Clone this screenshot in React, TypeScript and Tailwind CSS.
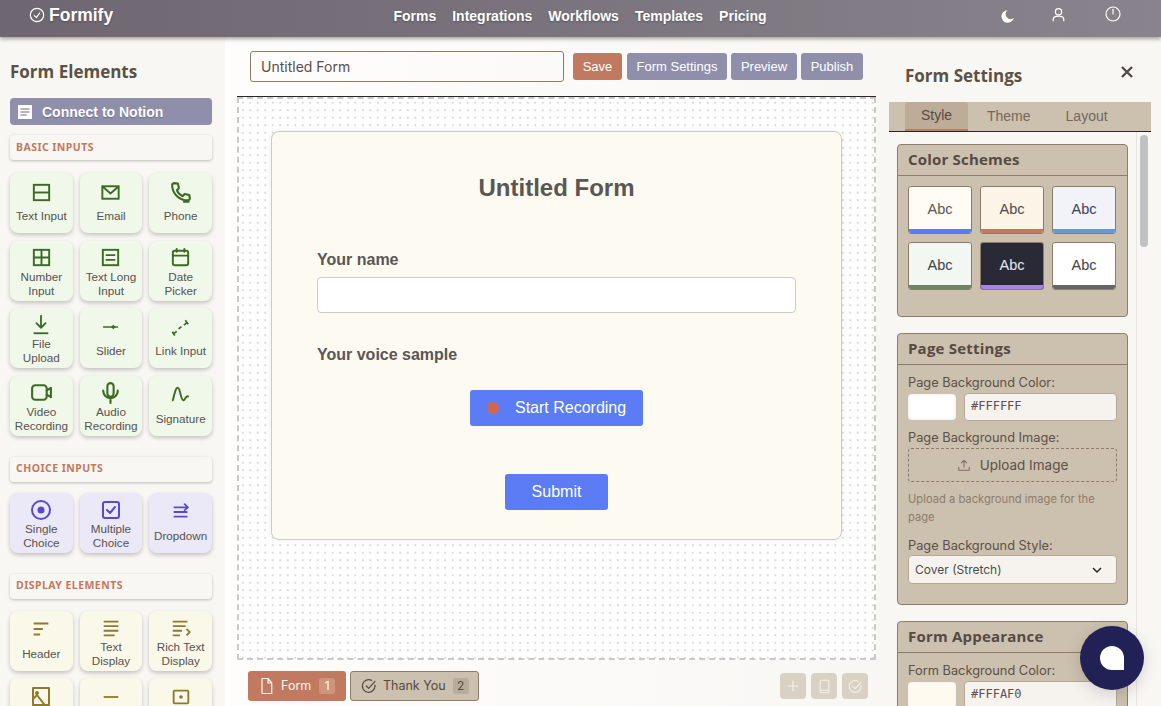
import React from 'react';

interface Tile {
  label: string;
  icon: React.ReactNode;
}

const I = ({ children, size = 22 }: { children: React.ReactNode; size?: number }) => (
  <svg
    width={size}
    height={size}
    viewBox="0 0 24 24"
    fill="none"
    stroke="currentColor"
    strokeWidth={2}
    strokeLinecap="round"
    strokeLinejoin="round"
    className="shrink-0"
  >
    {children}
  </svg>
);

const basicInputs: Tile[] = [
  { label: 'Text Input', icon: <I size={23}><rect x="4" y="4" width="16" height="16" strokeLinejoin="miter" /><path d="M4 12h16" strokeLinecap="butt" /></I> },
  { label: 'Email', icon: <I size={23}><rect x="3.5" y="5.5" width="17" height="13" strokeLinejoin="miter" /><path d="M4 6l8 7 8-7" /></I> },
  { label: 'Phone', icon: <I size={25}><path d="M6 3l3.5.5 1 4.500-2 1.800c1 2.600 3.200 4.800 5.700 5.700l1.800-2 4.500 1 .5 3.500c-.2 1-1 1.500-2 1.500C10.800 19.500 4 13 4 5c0-1 .8-1.800 2-2z" /><path d="M20 21h-5" strokeWidth={1.500} /></I> },
  { label: 'Number\nInput', icon: <I size={23}><rect x="4" y="4" width="16" height="16" strokeLinejoin="miter" /><path d="M12 4v16M4 12h16" strokeLinecap="butt" /></I> },
  { label: 'Text Long\nInput', icon: <I size={23}><rect x="4" y="4" width="16" height="16" strokeLinejoin="miter" /><path d="M7 9.500h10M7 14.500h10" strokeLinecap="butt" /></I> },
  { label: 'Date\nPicker', icon: <I size={23}><rect x="4" y="5" width="16" height="15" rx="2" /><path d="M4 10h16M8 3v3M16 3v3" /></I> },
  { label: 'File\nUpload', icon: <I><path d="M12 2v13M7 10l5 5 5-5" /><path d="M4 21h16" strokeLinecap="butt" /></I> },
  { label: 'Slider', icon: <I><path d="M4 12h15" strokeWidth={1.800} /><path d="M12 12l2.500-2.500L17 12l-2.500 2.500z" fill="currentColor" stroke="none" /></I> },
  { label: 'Link Input', icon: <I size={23}><path d="M4 19l4-3M3.500 16.500l2.500 4M10 13.500l3-2.500M15.500 9.500l4-3M17 4.500l3 4" strokeWidth={1.800} strokeLinecap="butt" /></I> },
  { label: 'Video\nRecording', icon: <I size={25}><rect x="3" y="5" width="14" height="14" rx="3" /><path d="M17 10l4-2.500v9L17 14" /></I> },
  { label: 'Audio\nRecording', icon: <I size={25}><rect x="9" y="3" width="6" height="13" rx="3" /><path d="M5 10c0 4.500 3 7.500 7 7.500s7-3 7-7.500M12 17.500V22" /></I> },
  { label: 'Signature', icon: <I size={23}><path d="M4 18C6 10 7 5 9 5c3 0 3 13 6 13 2 0 2-5 5-4" /></I> },
];

const choiceInputs: Tile[] = [
  { label: 'Single\nChoice', icon: <I size={24}><circle cx="12" cy="12" r="9" /><circle cx="12" cy="12" r="2.500" fill="currentColor" /></I> },
  { label: 'Multiple\nChoice', icon: <I size={24}><rect x="4" y="4" width="16" height="16" rx="2" /><path d="M8 12l3 3 5-6" /></I> },
  { label: 'Dropdown', icon: <I><path d="M4 7h15M4 12h15M4 17h15" strokeLinecap="butt" /><path d="M16 3.500L19.500 7 16 10" /></I> },
];

const displayElements: Tile[] = [
  { label: 'Header', icon: <I><path d="M4 5h16M4 11h10M4 17h7" strokeWidth={2.200} strokeLinecap="butt" /></I> },
  { label: 'Text\nDisplay', icon: <I><path d="M4 5h16M4 10h16M4 15h16M4 20h12" strokeLinecap="butt" /></I> },
  { label: 'Rich Text\nDisplay', icon: <I><path d="M3 5h16M3 10h14M3 15h10M3 20h8M18 13l3.500 3.500L18 20" strokeLinecap="butt" /></I> },
  { label: '', icon: <I size={24}><rect x="4" y="3" width="16" height="17" /><path d="M4 14l4-4 10 13" /><circle cx="8" cy="8" r="1" /></I> },
  { label: '', icon: <I><path d="M4 12h16" strokeLinecap="butt" /></I> },
  { label: '', icon: <I><rect x="4" y="5" width="16" height="14" rx="1" /><circle cx="12" cy="12" r="1" fill="currentColor" /></I> },
];

const schemes = [
  { bg: 'bg-[#fffbf5]', text: 'text-[#5a5654]', bar: 'bg-[#5c7cf5]' },
  { bg: 'bg-[#fdf4e8]', text: 'text-[#4f4a46]', bar: 'bg-[#c17a5f]' },
  { bg: 'bg-[#f1f3f9]', text: 'text-[#3a4256]', bar: 'bg-[#6c97d6]' },
  { bg: 'bg-[#f3f7f1]', text: 'text-[#38444a]', bar: 'bg-[#6b8560]' },
  { bg: 'bg-[#2a2a36]', text: 'text-[#e8e8ee]', bar: 'bg-[#a684ee]' },
  { bg: 'bg-white', text: 'text-[#3f4248]', bar: 'bg-[#666666]' },
];

const ElementGrid = ({ tiles, color }: { tiles: Tile[]; color: string }) => {
  const palette: Record<string, { bg: string; icon: string }> = {
    green: { bg: 'bg-[#f0f8e9]', icon: 'text-[#3b6b22]' },
    purple: { bg: 'bg-[#ebe8f8]', icon: 'text-[#5a48cf]' },
    yellow: { bg: 'bg-[#faf8e9]', icon: 'text-[#8e7a2e]' },
  };
  const p = palette[color];
  return (
    <div className="grid grid-cols-3 gap-x-[7px] gap-y-[7.5px]">
      {tiles.map((t, i) => {
        const twoLines = t.label.includes('\n');
        return (
          <div
            key={i}
            className={`h-[60px] rounded-[8px] ${p.bg} shadow-[0_2px_4px_rgba(0,0,0,0.22)] flex flex-col items-center justify-center ${
              twoLines ? 'pt-[3px]' : 'pb-[2px]'
            }`}
          >
            <span className={`h-[22px] flex items-center justify-center ${p.icon}`}>{t.icon}</span>
            <span
              className={`min-h-[14px] text-[11.7px] leading-[14px] text-center whitespace-pre-line text-[#575350] ${
                twoLines ? 'mt-[1px]' : 'mt-[6px]'
              }`}
            >
              {t.label}
            </span>
          </div>
        );
      })}
    </div>
  );
};

const SectionHeader = ({ title }: { title: string }) => (
  <div className="h-[25px] rounded-[4px] bg-[#f9f7f4] shadow-[0_1px_3px_rgba(0,0,0,0.25)] flex items-center pl-[6px] font-['Noto_Sans',sans-serif] font-bold text-[10.5px] tracking-[0.45px] text-[#c4785d]">
    {title}
  </div>
);

const Panel = ({ title, children, className }: { title: string; children: React.ReactNode; className: string }) => (
  <div className={`shrink-0 rounded-[4px] border border-[#8c7d6b] bg-[#ccc0ae] ${className}`}>
    <div className="h-[31px] border-b border-[#8c7d6b] pl-[10px] pb-[2px] flex items-center font-['Open_Sans',sans-serif] font-bold text-[15px] tracking-[0.2px] text-[#574a42]">
      {title}
    </div>
    {children}
  </div>
);

const ColorField = ({ swatch, value }: { swatch: string; value: string }) => (
  <div className="mt-[1px] flex items-center gap-[8px]">
    <div className={`w-[48px] h-[26px] rounded-[4px] border-2 border-[#f9f7f4] ${swatch}`} />
    <div className="w-[153px] h-[28px] rounded-[4px] border border-[#b5a999] bg-[#f6f3ef] pl-[6px] pb-[2px] flex items-center font-['DejaVu_Sans_Mono',monospace] text-[12px] text-[#5a5250]">
      {value}
    </div>
  </div>
);

const fieldLabel = "font-['Inter',sans-serif] text-[12.8px] leading-[18px] text-[#5c5048]";

export default function App() {
  return (
    <div className="w-[1161px] h-[706px] overflow-hidden relative flex flex-col bg-[#f9f7f4] font-['Liberation_Sans',Arial,sans-serif]">
      <header className="relative z-10 h-[37px] shrink-0 flex items-center bg-gradient-to-r from-[#6e6670] to-[#88838c] shadow-[0_2px_4px_rgba(60,55,40,0.45)] text-white">
        <div className="flex-1 flex items-center pl-[29px] mt-[-6px]">
          <svg width="16" height="16" viewBox="0 0 24 24" fill="none" stroke="currentColor" strokeWidth={1.800} strokeLinecap="round" strokeLinejoin="round" className="mt-[-2px]">
            <circle cx="12" cy="12" r="10" />
            <path d="M8 13l3 3 5-7" />
          </svg>
          <span className="ml-[4px] text-[17.5px] font-bold [text-shadow:0_1px_2px_rgba(0,0,0,0.25)]">Formify</span>
        </div>
        <nav className="flex gap-[16px] ml-[10px] mt-[-5px] text-[14px] font-bold [text-shadow:0_1px_2px_rgba(0,0,0,0.3)]">
          <span>Forms</span>
          <span>Integrations</span>
          <span>Workflows</span>
          <span>Templates</span>
          <span>Pricing</span>
        </nav>
        <div className="flex-1 flex items-center justify-end pr-[40px] mt-[-8px]">
          <svg width="15" height="15" viewBox="0 0 24 24" fill="currentColor" className="mt-[3px]">
            <path d="M12 2a10 10 0 1 0 10 12.500A8 8 0 0 1 12 2z" />
          </svg>
          <svg width="15" height="15" viewBox="0 0 24 24" fill="none" stroke="currentColor" strokeWidth={2} strokeLinecap="round" className="ml-[36px]">
            <circle cx="12" cy="7.500" r="5" />
            <path d="M3.500 22v-2c0-3.500 3-5.500 8.500-5.500s8.500 2 8.500 5.500v2" />
          </svg>
          <svg width="16" height="16" viewBox="0 0 24 24" fill="none" stroke="currentColor" strokeWidth={1.800} strokeLinecap="round" className="ml-[39px] mt-[-1px]">
            <circle cx="12" cy="12" r="10.500" />
            <path d="M12 5v7" />
          </svg>
        </div>
      </header>

      <div className="flex-1 flex min-h-0">
        {/* left sidebar */}
        <aside className="w-[225px] shrink-0 overflow-hidden pl-[10px] pr-[13px] pt-[26px] bg-[#f9f7f4]">
          <h2 className="font-['Open_Sans',sans-serif] font-bold text-[17px] leading-[18px] text-[#5a5246]">Form Elements</h2>
          <div className="mt-[17px] h-[27px] rounded-[4px] bg-[#8f8fac] flex items-center pl-[7px] text-white font-bold text-[14px] [text-shadow:0_1px_1px_rgba(0,0,0,0.25)]">
            <svg width="16" height="16" viewBox="0 0 16 16" className="mr-[9px]">
              <rect x="1" y="1" width="14" height="14" fill="#ffffff" />
              <path d="M3.500 5h9M3.500 8h9M3.500 11h6" stroke="#6a6a88" strokeWidth={1.200} />
            </svg>
            <span className="mt-[1px]">Connect to Notion</span>
          </div>
          <div className="mt-[10px]"><SectionHeader title="BASIC INPUTS" /></div>
          <div className="mt-[13px]"><ElementGrid tiles={basicInputs} color="green" /></div>
          <div className="mt-[21px]"><SectionHeader title="CHOICE INPUTS" /></div>
          <div className="mt-[11px]"><ElementGrid tiles={choiceInputs} color="purple" /></div>
          <div className="mt-[21px]"><SectionHeader title="DISPLAY ELEMENTS" /></div>
          <div className="mt-[12px]"><ElementGrid tiles={displayElements} color="yellow" /></div>
        </aside>

        {/* builder */}
        <main className="w-[664px] shrink-0 pl-[12px] pr-[13px] flex flex-col bg-gradient-to-r from-[#fefdfb] to-[#f9f7f4]">
          <div className="h-[60px] shrink-0 border-b border-[#2a2624] pl-[13px] flex items-start pt-[14px]">
            <div className="w-[314px] h-[31px] rounded-[3px] border border-[#8c7d6b] pl-[10px] flex items-center font-['Inter',sans-serif] text-[14px] text-[#5a4e48]">
              Untitled Form
            </div>
            <div className="ml-[9px] mt-[2px] flex text-[13px] text-white">
              <span className="w-[49px] h-[27px] rounded-[3px] bg-[#c17a5f] flex items-center justify-center">Save</span>
              <span className="ml-[5px] w-[100px] h-[27px] rounded-[3px] bg-[#8f8fac] flex items-center justify-center">Form Settings</span>
              <span className="ml-[4px] w-[66px] h-[27px] rounded-[3px] bg-[#8f8fac] flex items-center justify-center">Preview</span>
              <span className="ml-[4px] w-[62px] h-[27px] rounded-[3px] bg-[#8f8fac] flex items-center justify-center">Publish</span>
            </div>
          </div>

          <div className="h-[563px] shrink-0 border-2 border-dashed border-[#c9c9c9] bg-white bg-[radial-gradient(#c8c8c8_0.6px,transparent_0.8px)] bg-[size:7.5px_7.5px] p-[32px]">
            <div className="h-[409px] rounded-[8px] border border-[#cfcbc4] bg-[#fdfaf2] shadow-[0_0_6px_rgba(0,0,0,0.08)] px-[45px] pt-[40px] flex flex-col items-center text-[#5a5654]">
              <h1 className="text-[24px] leading-[32px] font-bold">Untitled Form</h1>
              <label className="self-start mt-[46px] text-[16px] leading-[20px] font-bold">Your name</label>
              <div className="self-stretch mt-[7px] h-[36px] rounded-[4px] border border-[#cfcbc4] bg-white" />
              <label className="self-start mt-[32px] text-[16px] leading-[20px] font-bold">Your voice sample</label>
              <div className="mt-[25px] w-[173px] h-[36px] rounded-[3px] bg-[#5c7cf5] flex items-center pl-[17px] text-white text-[16px]">
                <span className="w-[12px] h-[12px] rounded-full bg-[#d2654f] mr-[16px]" />
                Start Recording
              </div>
              <div className="mt-[48px] w-[103px] h-[36px] rounded-[3px] bg-[#5c7cf5] flex items-center justify-center text-white text-[16px]">
                Submit
              </div>
            </div>
          </div>

          <div className="flex-1 flex items-start pl-[11px] pt-[11px] pr-[8px] font-['Inter',sans-serif] text-[12.5px]">
            <div className="w-[98px] h-[30px] rounded-[3px] bg-[#c17a5f] flex items-center pl-[11px] text-[#fdf8f3]">
              <svg width="15" height="18" viewBox="0 0 20 24" fill="none" stroke="currentColor" strokeWidth={1.600} strokeLinejoin="round" className="shrink-0">
                <path d="M4 2h8l5 6v14H4zM12 2v6h5" />
              </svg>
              <span className="ml-[7px]">Form</span>
              <span className="ml-[8px] w-[16px] h-[16px] rounded-[3px] bg-white/20 flex items-center justify-center text-[12px]">1</span>
            </div>
            <div className="ml-[4px] w-[129px] h-[30px] rounded-[3px] border border-[#8c7d6b] bg-[#ccc0ae] flex items-center pl-[10px] text-[#574a42]">
              <svg width="16" height="16" viewBox="0 0 24 24" fill="none" stroke="currentColor" strokeWidth={1.800} strokeLinecap="round" strokeLinejoin="round" className="shrink-0">
                <path d="M21 10.500V12a9.500 9.500 0 1 1-5-8.400" />
                <path d="M8 12l3.500 3.500L21 5" />
              </svg>
              <span className="ml-[6px]">Thank You</span>
              <span className="ml-[7px] w-[16px] h-[16px] rounded-[3px] bg-[#8c7d6b]/30 flex items-center justify-center text-[12px]">2</span>
            </div>
            <div className="ml-auto flex gap-[5px] mt-[2px] text-[#f4f0e9]">
              <span className="w-[26px] h-[26px] rounded-[4px] bg-[#d9d1c4] flex items-center justify-center">
                <svg width="14" height="14" viewBox="0 0 24 24" fill="none" stroke="currentColor" strokeWidth={2}><path d="M12 3v18M3 12h18" /></svg>
              </span>
              <span className="w-[26px] h-[26px] rounded-[4px] bg-[#d9d1c4] flex items-center justify-center">
                <svg width="15" height="15" viewBox="0 0 24 24" fill="none" stroke="currentColor" strokeWidth={1.800} strokeLinejoin="round"><path d="M5 4a2 2 0 0 1 2-2h12v20H7a2 2 0 0 1-2-2zM5 18h14" /></svg>
              </span>
              <span className="w-[26px] h-[26px] rounded-[4px] bg-[#d9d1c4] flex items-center justify-center">
                <svg width="15" height="15" viewBox="0 0 24 24" fill="none" stroke="currentColor" strokeWidth={1.800} strokeLinecap="round" strokeLinejoin="round"><path d="M21 10.500V12a9.500 9.500 0 1 1-5-8.400" /><path d="M8 12l3.500 3.500L21 5" /></svg>
              </span>
            </div>
          </div>
        </main>

        {/* right settings */}
        <aside className="flex-1 min-w-0 bg-[#f9f7f4] flex flex-col">
          <div className="h-[65px] shrink-0 flex items-start justify-between pl-[16px] pr-[28px] pt-[28px]">
            <h2 className="font-['Open_Sans',sans-serif] font-bold text-[17px] leading-[21px] text-[#5a5246]">Form Settings</h2>
            <svg width="12" height="12" viewBox="0 0 12 12" stroke="#4f4a46" strokeWidth={2.400} className="mt-[1px]"><path d="M1 1l10 10M11 1L1 11" /></svg>
          </div>
          <div className="w-[262px] h-[30px] shrink-0 bg-[#ccc0ae] border-b border-[#2a2624] pl-[16px] flex text-[14px] text-[#74685c]">
            <span className="w-[63px] rounded-t-[3px] border-b-2 border-[#c17a5f] bg-[#bcac98] text-[#574a42] flex items-center justify-center">Style</span>
            <span className="ml-[19px] flex items-center">Theme</span>
            <span className="ml-[35px] flex items-center">Layout</span>
          </div>
          <div className="flex-1 min-h-0 overflow-hidden flex w-[262px]">
            <div className="w-[247px] shrink-0 pl-[8px] pt-[12px] flex flex-col gap-[16px]">
              <Panel title="Color Schemes" className="w-[231px] h-[173px]">
                <div className="grid grid-cols-3 gap-x-[8px] gap-y-[8px] pt-[10px] pl-[10px] pr-[11px]">
                  {schemes.map((s, i) => (
                    <div key={i} className={`h-[48px] rounded-[3px] border border-[#8c7d6b] overflow-hidden flex flex-col ${s.bg}`}>
                      <div className={`flex-1 pt-[4px] flex items-center justify-center text-[14.5px] ${s.text}`}>Abc</div>
                      <div className={`h-[4px] ${s.bar}`} />
                    </div>
                  ))}
                </div>
              </Panel>
              <Panel title="Page Settings" className="w-[231px] h-[272px]">
                <div className="px-[10px] pt-[9px]">
                  <div className={fieldLabel}>Page Background Color:</div>
                  <ColorField swatch="bg-white" value="#FFFFFF" />
                  <div className={`mt-[8px] ${fieldLabel}`}>Page Background Image:</div>
                  <div className="mt-[1px] h-[34px] rounded-[3px] border border-dashed border-[#8c7d6b] flex items-center justify-center font-['Inter',sans-serif] text-[13.5px] text-[#5c5048]">
                    <svg width="14" height="14" viewBox="0 0 24 24" fill="none" stroke="#7c6f62" strokeWidth={1.800} strokeLinecap="round" strokeLinejoin="round" className="mr-[9px]">
                      <path d="M12 16V4M7.500 8.500L12 4l4.500 4.500M3 16v5h18v-5" />
                    </svg>
                    Upload Image
                  </div>
                  <div className="mt-[8px] font-['Inter',sans-serif] text-[11.2px] leading-[18px] text-[#8c7d6b]">Upload a background image for the page</div>
                  <div className={`mt-[11px] ${fieldLabel}`}>Page Background Style:</div>
                  <div className="h-[29px] rounded-[4px] border border-[#b5a999] bg-[#f6f3ef] pl-[6px] pr-[13px] flex items-center justify-between font-['Inter',sans-serif] text-[12px] text-[#4f4a46]">
                    Cover (Stretch)
                    <svg width="12" height="12" viewBox="0 0 24 24" fill="none" stroke="#2a2624" strokeWidth={3}><path d="M4 8l8 8 8-8" /></svg>
                  </div>
                </div>
              </Panel>
              <Panel title="Form Appearance" className="w-[231px] h-[200px]">
                <div className="px-[10px] pt-[9px]">
                  <div className={fieldLabel}>Form Background Color:</div>
                  <ColorField swatch="bg-[#fffaf0]" value="#FFFAF0" />
                </div>
              </Panel>
            </div>
            <div className="w-[15px] shrink-0 border-l border-[#e8e5df] pl-[3px] pt-[3px]">
              <div className="w-[8px] h-[112px] rounded-full bg-[#c1c1c1]" />
            </div>
          </div>
        </aside>
      </div>

      {/* chat launcher */}
      <div className="absolute left-[1080px] top-[626px] w-[64px] h-[64px] rounded-full bg-[#212156] shadow-[0_4px_16px_rgba(0,0,0,0.15)] flex items-center justify-center">
        <div className="w-[24px] h-[24px] bg-white rounded-t-full rounded-bl-full" />
      </div>
    </div>
  );
}
